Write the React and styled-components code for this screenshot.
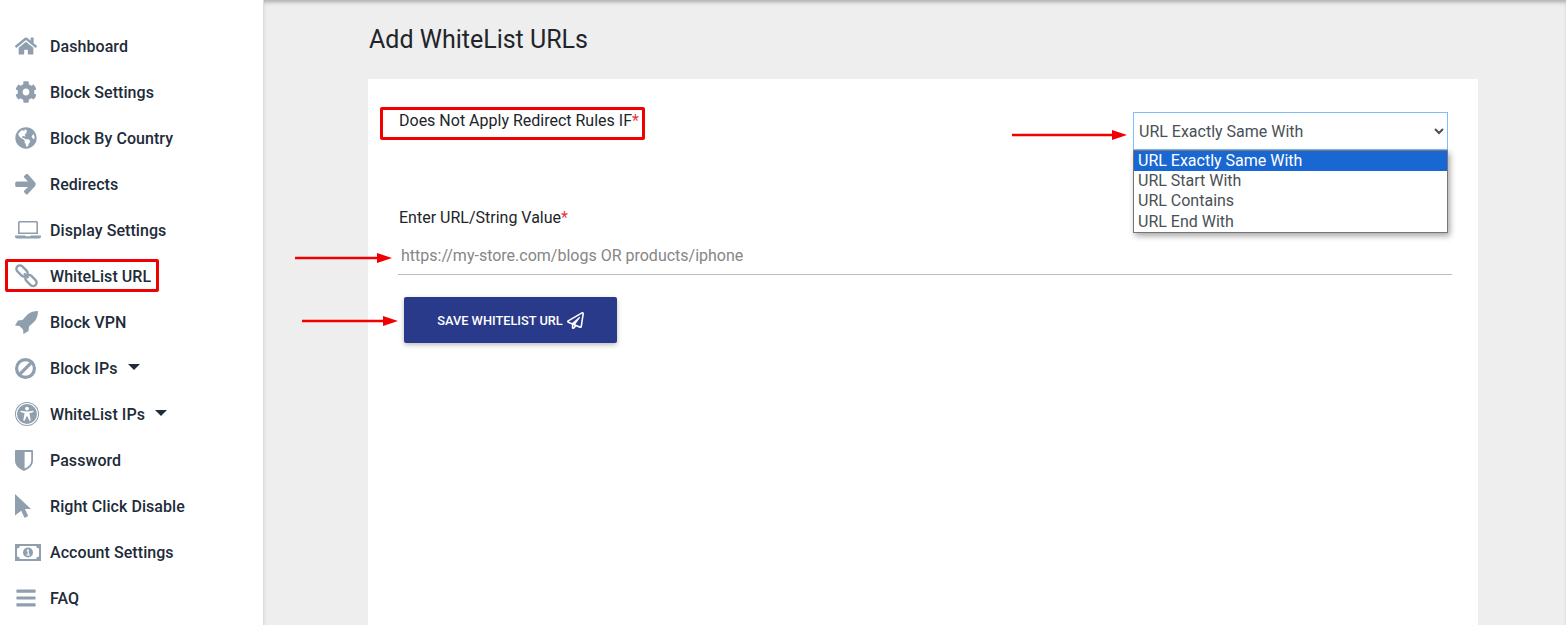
import React from "react";
import styled, { createGlobalStyle } from "styled-components";
import { FaHome, FaCog, FaGlobeAmericas, FaBars, FaRegPaperPlane } from "react-icons/fa";

const GlobalStyle = createGlobalStyle`
  html, body {
    margin: 0;
    padding: 0;
    height: 625px;
    overflow: hidden;
    font-family: Roboto, "Liberation Sans", sans-serif;
  }
`;

const Page = styled.div`
  display: flex;
  height: 625px;
  overflow: hidden;
  position: relative;
`;

const Sidebar = styled.nav`
  width: 264px;
  flex-shrink: 0;
  box-sizing: border-box;
  padding-top: 23px;
  background: #fff;
  border-right: 1px solid #dcdcdc;
`;

const NavItem = styled.div`
  display: flex;
  align-items: center;
  height: 46px;
  padding-left: 15px;
  position: relative;
  color: #212b39;
  font-size: 16px;
  font-weight: 500;
  letter-spacing: 0.06px;
`;

const IconSlot = styled.span`
  width: 35px;
  flex-shrink: 0;
  display: flex;
  align-items: center;
  color: #8f9fae;
  font-size: 22px;
`;

const Caret = styled.span`
  width: 0;
  height: 0;
  margin: 0 0 2px 10.5px;
  border-left: 6px solid transparent;
  border-right: 6px solid transparent;
  border-top: 6px solid #212b39;
`;

const NavHighlight = styled.span`
  position: absolute;
  left: 5px;
  top: 6px;
  width: 154px;
  height: 33px;
  box-sizing: border-box;
  border: 3px solid #f00000;
  border-radius: 2px;
`;

const Main = styled.main`
  flex: 1;
  background: #eeeeee;
  box-shadow: inset 0 4px 4px -2px rgba(0, 0, 0, 0.3);
  padding: 0 88px 0 104px;
`;

const Title = styled.h1`
  margin: 0;
  padding-top: 25px;
  padding-left: 1px;
  height: 79px;
  box-sizing: border-box;
  font-size: 25px;
  line-height: 29px;
  font-weight: 400;
  color: #212529;
`;

const Card = styled.section`
  background: #fff;
  height: 546px;
  padding: 33px 26px 0 30px;
  position: relative;
`;

const TopRow = styled.div`
  display: flex;
  justify-content: space-between;
  align-items: flex-start;
  padding-left: 1px;
  padding-right: 4px;
  height: 97px;
`;

const Label = styled.label`
  display: block;
  font-size: 16px;
  line-height: 18px;
  color: #212529;
`;

const Req = styled.span`
  color: #f0323c;
`;

const Select = styled.select`
  width: 315px;
  height: 38px;
  box-sizing: border-box;
  padding: 0 0 0 1px;
  font-family: inherit;
  font-size: 16px;
  color: #495057;
  background: #fff;
  border: 1px solid #80bdff;
  border-radius: 0;
  outline: none;
`;

const UrlInput = styled.input`
  display: block;
  width: 100%;
  height: 39px;
  margin-top: 9px;
  box-sizing: border-box;
  padding: 0 3px;
  font-family: inherit;
  font-size: 16px;
  border: none;
  border-bottom: 1px solid #bdbdbd;
  outline: none;
  &::placeholder {
    color: #868686;
  }
`;

const FieldLabel = styled(Label)`
  padding-left: 1px;
`;

const SaveButton = styled.button`
  display: flex;
  align-items: center;
  justify-content: center;
  gap: 4px;
  width: 213px;
  height: 46px;
  margin: 22px 0 0 6px;
  padding: 0;
  background: #293a8a;
  color: #fff;
  border: none;
  border-radius: 2px;
  font-family: inherit;
  font-size: 12.8px;
  font-weight: 500;
  text-transform: uppercase;
  box-shadow: 0 2px 5px rgba(0, 0, 0, 0.26);
  svg {
    font-size: 17px;
  }
`;

const LabelHighlight = styled.span`
  position: absolute;
  left: 12px;
  top: 28px;
  width: 265px;
  height: 33px;
  box-sizing: border-box;
  border: 3px solid #f00000;
  border-radius: 2px;
`;

const OptionList = styled.ul`
  position: absolute;
  left: 765px;
  top: 71px;
  width: 315px;
  margin: 0;
  padding: 0;
  box-sizing: border-box;
  list-style: none;
  background: #fff;
  border: 1px solid #767676;
  box-shadow: 2px 3px 6px rgba(0, 0, 0, 0.35);
`;

const Option = styled.li`
  height: 20.2px;
  line-height: 20px;
  padding-left: 4px;
  font-size: 16px;
  color: ${(p) => (p.$active ? "#fff" : "#495057")};
  background: ${(p) => (p.$active ? "#1967d2" : "transparent")};
`;

const ArrowMark = styled.svg`
  position: absolute;
  left: ${(p) => p.$left}px;
  top: ${(p) => p.$top}px;
`;

// font awesome 4 shapes that the icon packages no longer carry
const ArrowIcon = () => (
  <svg width="21" height="22" viewBox="0 0 21 22" fill="currentColor">
    <path d="M11 1.2 L9.4 2.8 Q8.4 3.8 9.4 4.8 L13 8.4 H2 Q0.2 8.4 0.2 10 V12.4 Q0.2 14 2 14 H13 L9.4 17.5 Q8.4 18.5 9.4 19.5 L10.8 21 Q11.8 22 12.8 21 L20.2 13 Q21.2 11.2 20.2 9.6 L12.9 1.2 Q12 0.4 11 1.2 Z" />
  </svg>
);

const LaptopIcon = () => (
  <svg width="26" height="18" viewBox="0 0 26 18" fill="currentColor">
    <path fillRule="evenodd" d="M4.5 0 H21.5 Q23 0 23 1.5 V13 H3 V1.5 Q3 0 4.5 0 Z M4.6 1.6 V11.4 H21.4 V1.6 Z" />
    <path d="M0 14.5 H10.5 V15.3 H15.5 V14.5 H26 V15.5 Q26 17.5 24 17.5 H2 Q0 17.5 0 15.5 Z" />
  </svg>
);

const LinkIcon = () => (
  <svg width="23" height="24" viewBox="0 0 23 24" fill="none" stroke="currentColor" strokeWidth="2.4">
    <rect x="0.5" y="3.5" width="13" height="7" rx="3.5" transform="rotate(45 7 7)" />
    <rect x="9.5" y="13" width="13" height="7" rx="3.5" transform="rotate(45 16 16.5)" />
    <path d="M9 9.5 L13.5 14" />
  </svg>
);

const RocketIcon = () => (
  <svg width="23" height="23" viewBox="0 0 23 23" fill="currentColor">
    <path d="M23 0 Q23 7 19 11 L14 15.5 L13.5 20 L8.5 23 L8 18.5 L4.5 15 L0 14.5 L3 9.5 L7.5 9 L12 4 Q16 0 23 0 Z" />
  </svg>
);

const BanIcon = () => (
  <svg width="21" height="21" viewBox="0 0 21 21" fill="none" stroke="currentColor" strokeWidth="3.2">
    <circle cx="10.5" cy="10.5" r="8.9" />
    <path d="M4.4 16.6 L16.6 4.4" />
  </svg>
);

const AccessIcon = () => (
  <svg width="24" height="24" viewBox="0 0 24 24" fill="currentColor">
    <path
      fillRule="evenodd"
      d="M12 0 A12 12 0 1 1 12 24 A12 12 0 1 1 12 0 Z M12 1 A11 11 0 1 0 12 23 A11 11 0 1 0 12 1 Z"
    />
    <circle cx="12" cy="12" r="10" />
    <circle cx="12" cy="6.6" r="1.9" fill="#fff" />
    <path
      fill="#fff"
      d="M5.8 8.8 Q12 10.4 18.2 8.8 L18.6 10 L14.4 11.2 L15.8 18.4 L14.4 18.8 L12.4 14.2 H11.6 L9.6 18.8 L8.2 18.4 L9.6 11.2 L5.4 10 Z"
    />
  </svg>
);

const ShieldIcon = () => (
  <svg width="18" height="21" viewBox="0 0 18 21" fill="currentColor">
    <path
      fillRule="evenodd"
      d="M1 0 H17 Q18 0 18 1 V11 Q18 17 9 21 Q0 17 0 11 V1 Q0 0 1 0 Z M9.6 2 V18.6 Q16.2 15.4 16.2 11 V2 Z"
    />
  </svg>
);

const PointerIcon = () => (
  <svg width="16" height="24" viewBox="0 0 16 24" fill="currentColor">
    <path d="M0 0 L16 15 H10 L13.2 22 L9.6 24 L6.2 16.8 L0 21.5 Z" />
  </svg>
);

const MoneyIcon = () => (
  <svg width="26" height="17" viewBox="0 0 26 17">
    <path fill="currentColor" d="M0 0 H26 V17 H0 Z" />
    <path fill="#fff" d="M5 2 H21 Q21.4 4.2 24 4.6 V12.4 Q21.4 12.8 21 15 H5 Q4.6 12.8 2 12.4 V4.6 Q4.6 4.2 5 2 Z" />
    <circle cx="13" cy="8.5" r="5" fill="currentColor" />
    <path fill="#fff" d="M12 5.6 H13.8 V10.6 H15 V11.6 H11.4 V10.6 H12.6 V7 L11.6 7.6 Z" />
  </svg>
);

const navItems = [
  { icon: <FaHome />, label: "Dashboard" },
  { icon: <FaCog />, label: "Block Settings" },
  { icon: <FaGlobeAmericas />, label: "Block By Country" },
  { icon: <ArrowIcon />, label: "Redirects" },
  { icon: <LaptopIcon />, label: "Display Settings" },
  { icon: <LinkIcon />, label: "WhiteList URL", marked: true },
  { icon: <RocketIcon />, label: "Block VPN" },
  { icon: <BanIcon />, label: "Block IPs", caret: true },
  { icon: <AccessIcon />, label: "WhiteList IPs", caret: true },
  { icon: <ShieldIcon />, label: "Password" },
  { icon: <PointerIcon />, label: "Right Click Disable" },
  { icon: <MoneyIcon />, label: "Account Settings" },
  { icon: <FaBars />, label: "FAQ" },
];

const options = ["URL Exactly Same With", "URL Start With", "URL Contains", "URL End With"];

const Arrow = ({ left, top, width }) => (
  <ArrowMark $left={left} $top={top} width={width} height="12" viewBox={`0 0 ${width} 12`}>
    <path d={`M0 6 H${width - 14}`} stroke="#f00000" strokeWidth="2.5" />
    <path d={`M${width - 15} 1 L${width} 6 L${width - 15} 11 Z`} fill="#f00000" />
  </ArrowMark>
);

export default function App() {
  return (
    <Page>
      <GlobalStyle />
      <Sidebar>
        {navItems.map(({ icon, label, caret, marked }) => (
          <NavItem key={label}>
            <IconSlot>{icon}</IconSlot>
            {label}
            {caret && <Caret />}
            {marked && <NavHighlight />}
          </NavItem>
        ))}
      </Sidebar>
      <Main>
        <Title>Add WhiteList URLs</Title>
        <Card>
          <TopRow>
            <Label>
              Does Not Apply Redirect Rules IF<Req>*</Req>
            </Label>
            <Select defaultValue={options[0]}>
              {options.map((o) => (
                <option key={o}>{o}</option>
              ))}
            </Select>
          </TopRow>
          <FieldLabel>
            Enter URL/String Value<Req>*</Req>
          </FieldLabel>
          <UrlInput placeholder="https://my-store.com/blogs OR products/iphone" />
          <SaveButton>
            Save WhiteList URL <FaRegPaperPlane />
          </SaveButton>
          <LabelHighlight />
          <OptionList>
            {options.map((o, i) => (
              <Option key={o} $active={i === 0}>
                {o}
              </Option>
            ))}
          </OptionList>
          <Arrow left={644} top={50} width={115} />
          <Arrow left={-73} top={173} width={97} />
          <Arrow left={-66} top={236} width={96} />
        </Card>
      </Main>
    </Page>
  );
}
